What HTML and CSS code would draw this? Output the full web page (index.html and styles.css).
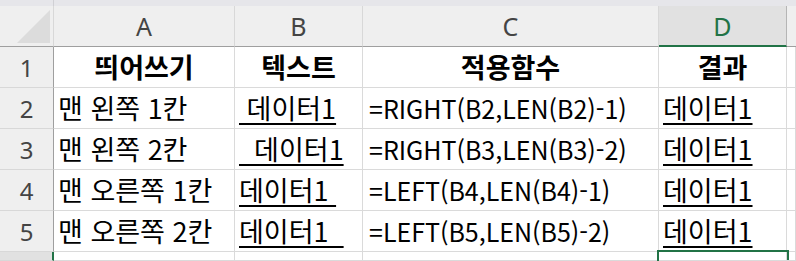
FILE: index.html
```html
<!DOCTYPE html>
<html lang="ko">
<head>
<meta charset="utf-8">
<link rel="stylesheet" href="styles.css">
</head>
<body>
<div class="sheet">
  <div class="strip first"></div>
  <div class="strip rest"></div>

  <div class="corner"><svg class="tri" width="54" height="41" viewBox="0 0 54 41"><polygon points="50,4 50,37 17,37" fill="#dcdcdc"/></svg></div>
  <div class="colhead">A</div>
  <div class="colhead">B</div>
  <div class="colhead">C</div>
  <div class="colhead sel">D</div>
  <div class="colhead last"></div>

  <div class="rowhead">1</div>
  <div class="cell bold center">띄어쓰기</div>
  <div class="cell bold center">텍스트</div>
  <div class="cell bold center">적용함수</div>
  <div class="cell bold center">결과</div>
  <div class="cell"></div>

  <div class="rowhead">2</div>
  <div class="cell">맨 왼쪽 1칸</div>
  <div class="cell"><span class="u"> 데이터1</span></div>
  <div class="cell formula">=RIGHT(B2,LEN(B2)-1)</div>
  <div class="cell"><span class="u">데이터1</span></div>
  <div class="cell"></div>

  <div class="rowhead">3</div>
  <div class="cell">맨 왼쪽 2칸</div>
  <div class="cell"><span class="u">  데이터1</span></div>
  <div class="cell formula">=RIGHT(B3,LEN(B3)-2)</div>
  <div class="cell"><span class="u">데이터1</span></div>
  <div class="cell"></div>

  <div class="rowhead">4</div>
  <div class="cell">맨 오른쪽 1칸</div>
  <div class="cell"><span class="u">데이터1 </span></div>
  <div class="cell formula">=LEFT(B4,LEN(B4)-1)</div>
  <div class="cell"><span class="u">데이터1</span></div>
  <div class="cell"></div>

  <div class="rowhead">5</div>
  <div class="cell">맨 오른쪽 2칸</div>
  <div class="cell"><span class="u">데이터1  </span></div>
  <div class="cell formula">=LEFT(B5,LEN(B5)-2)</div>
  <div class="cell"><span class="u">데이터1</span></div>
  <div class="cell"></div>

  <div class="rowhead sel"></div>
  <div class="cell"></div>
  <div class="cell"></div>
  <div class="cell"></div>
  <div class="cell active"></div>
  <div class="cell"></div>
</div>
</body>
</html>
```
FILE: styles.css
```css
* { box-sizing: border-box; }
html, body { margin: 0; padding: 0; background: #ffffff; }
body { font-family: "Noto Sans CJK KR", sans-serif; }

.sheet {
  display: grid;
  width: 796px;
  height: 261px;
  overflow: hidden;
  grid-template-columns: 54px 181px 128px 296px 128px 1fr;
  grid-template-rows: 6px repeat(6, 41px) 1fr;
}

.strip { background: #e6e6ea; }
.strip.first { border-right: 1px solid #d0d0d4; }
.strip.rest { grid-column: 2 / -1; }

.corner {
  background: #efefef;
  border-right: 1px solid #d8d8d8;
  border-bottom: 1px solid #9f9f9f;
}
.tri { display: block; }

.colhead {
  background: #efefef;
  border-right: 1px solid #d8d8d8;
  border-bottom: 1px solid #9f9f9f;
  display: flex;
  align-items: center;
  justify-content: center;
  font-family: "Noto Sans", sans-serif;
  font-size: 25px;
  color: #444444;
}
.colhead.sel {
  background: #e1e1e1;
  color: #217346;
  border-right: 1px solid #b5b5b5;
  border-bottom: 2px solid #217346;
}
.colhead.last { border-right: none; }

.rowhead {
  background: #efefef;
  border-right: 1px solid #9f9f9f;
  border-bottom: 1px solid #d8d8d8;
  display: flex;
  align-items: center;
  justify-content: center;
  font-family: "Noto Sans", sans-serif;
  font-size: 24px;
  color: #444444;
}
.rowhead.sel {
  background: #e1e1e1;
  border-right: 2px solid #217346;
}

.cell {
  border-right: 1px solid #dadada;
  border-bottom: 1px solid #dadada;
  padding: 0 4px;
  line-height: 40px;
  font-size: 27px;
  color: #000000;
  white-space: pre;
  overflow: hidden;
}
.cell.center { text-align: center; padding: 0; }
.cell.bold { font-weight: 700; }
.cell.formula { font-size: 25px; padding-left: 6px; }
.cell.active { outline: 2px solid #217346; }

.u {
  text-decoration: underline;
  text-decoration-thickness: 2px;
  text-underline-offset: 4px;
}
```
